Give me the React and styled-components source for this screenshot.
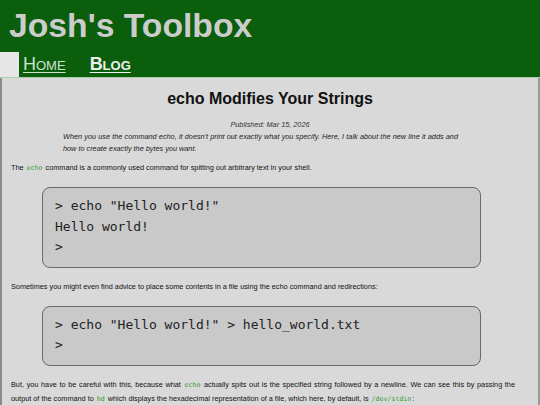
import React from 'react';
import styled, { createGlobalStyle } from 'styled-components';

const GlobalStyle = createGlobalStyle`
  html, body {
    margin: 0;
    padding: 0;
    background: #d9d9d9;
    font-family: "Liberation Sans", Arial, sans-serif;
  }
`;

const Header = styled.header`
  background: #0b5e0b;
  border-bottom: 1px solid #a9cfa9;
`;

const SiteTitle = styled.h1`
  margin: 0;
  padding: 6px 0 0 9px;
  height: 46px;
  font-size: 33.7px;
  line-height: 38px;
  font-weight: bold;
  color: #cccccc;
`;

const Nav = styled.nav`
  display: flex;
  align-items: stretch;
  height: 25px;
`;

const NavTab = styled.div`
  width: 19px;
  background: #e6e6e6;
`;

const NavLinks = styled.div`
  display: flex;
  align-items: center;
  gap: 24px;
  padding-left: 4px;
`;

const NavLink = styled.a`
  font-size: 18px;
  font-variant: small-caps;
  font-weight: ${p => (p.$active ? 'bold' : 'normal')};
  color: ${p => (p.$active ? '#eeeeee' : '#cfe0cf')};
  text-decoration: underline;
  text-underline-offset: 2px;
  cursor: pointer;
`;

const Main = styled.main`
  border-left: 2px solid #8a8a8a;
  border-right: 2px solid #9a9a9a;
  background: #d9d9d9;
  padding: 0 9px 20px;
  min-height: 330px;
`;

const PostTitle = styled.h2`
  margin: 0;
  padding-top: 12px;
  text-align: center;
  font-size: 16px;
  line-height: 18px;
  color: #111;
`;

const Published = styled.div`
  margin-top: 11px;
  text-align: center;
  font-size: 7.3px;
  line-height: 12px;
  font-style: italic;
  color: #333;
`;

const Summary = styled.div`
  margin: 0 0 0 52px;
  width: 395px;
  font-size: 7.3px;
  line-height: 12px;
  font-style: italic;
  text-align: justify;
  color: #222;
`;

const Para = styled.p`
  margin: 6px ${p => p.$inset || 0}px 0 0;
  font-size: 7.3px;
  line-height: 14px;
  text-align: justify;
  color: #111;
`;

const Code = styled.code`
  font-family: "DejaVu Sans Mono", monospace;
  font-size: 6.6px;
  padding: 0 1px;
  color: #2e9a2e;
`;

const Terminal = styled.pre`
  margin: 12px 0 12px 31px;
  width: 439px;
  box-sizing: border-box;
  padding: 8px 12px 9px;
  background: #c9c9c9;
  border: 1px solid #6a6a6a;
  border-radius: 8px;
  font-family: "DejaVu Sans Mono", monospace;
  font-size: 13px;
  line-height: 20.5px;
  color: #222;
  white-space: pre;
`;

export default function App() {
  return (
    <>
      <GlobalStyle />
      <Header>
        <SiteTitle>Josh's Toolbox</SiteTitle>
        <Nav>
          <NavTab />
          <NavLinks>
            <NavLink>Home</NavLink>
            <NavLink $active>Blog</NavLink>
          </NavLinks>
        </Nav>
      </Header>
      <Main>
        <PostTitle>echo Modifies Your Strings</PostTitle>
        <Published>Published: Mar 15, 2026</Published>
        <Summary>
          When you use the command echo, it doesn't print out exactly what you specify. Here, I talk about the new line it adds and how to create exactly the bytes you want.
        </Summary>
        <Para>
          The <Code>echo</Code> command is a commonly used command for spitting out arbitrary text in your shell.
        </Para>
        <Terminal>{`> echo "Hello world!"
Hello world!
>`}</Terminal>
        <Para>
          Sometimes you might even find advice to place some contents in a file using the echo command and redirections:
        </Para>
        <Terminal>{`> echo "Hello world!" > hello_world.txt
>`}</Terminal>
        <Para $inset={14}>
          But, you have to be careful with this, because what <Code>echo</Code> actually spits out is the specified string followed by a newline. We can see this by passing the output of the command to <Code>hd</Code> which displays the hexadecimal representation of a file, which here, by default, is <Code>/dev/stdin</Code>:
        </Para>
      </Main>
    </>
  );
}
